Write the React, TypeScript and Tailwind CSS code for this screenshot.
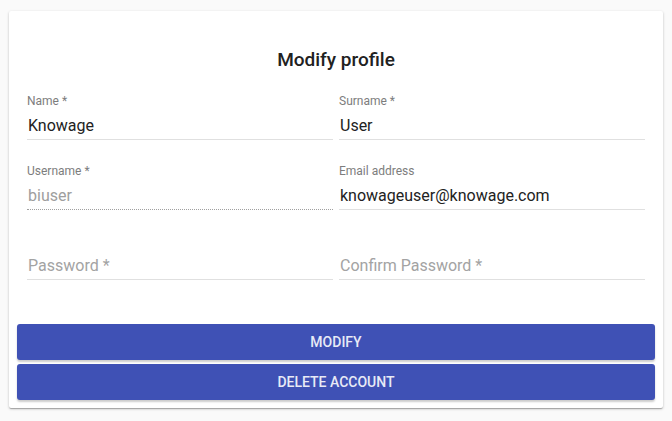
const fields = [
  [
    { label: "Name *", value: "Knowage" },
    { label: "Surname *", value: "User" },
  ],
  [
    { label: "Username *", value: "biuser", disabled: true },
    { label: "Email address", value: "knowageuser@knowage.com" },
  ],
  [
    { label: "", placeholder: "Password *" },
    { label: "", placeholder: "Confirm Password *" },
  ],
];

type Field = { label: string; value?: string; placeholder?: string; disabled?: boolean };

function Input({ f }: { f: Field }) {
  const underline = f.disabled
    ? "border-b border-dotted border-[#a0a0a0]"
    : "border-b border-[#e0e0e0]";
  return (
    <div className="flex flex-col">
      <label className="h-[16px] text-[12px] leading-[16px] text-[#7d7d7d]">{f.label}</label>
      <div className={`mt-[4px] h-[27px] pl-[1px] text-[16px] leading-[26px] ${underline}`}>
        {f.value ? (
          <span className={f.disabled ? "text-[#9e9e9e]" : "text-[#222222]"}>{f.value}</span>
        ) : (
          <span className="text-[#a3a3a3]">{f.placeholder}</span>
        )}
      </div>
    </div>
  );
}

export default function App() {
  return (
    <div className="min-h-screen bg-[#fafafa] pt-[11px] pl-[9px]" style={{ fontFamily: "Roboto, 'Liberation Sans', sans-serif" }}>
      <div className="w-[654px] rounded-[2px] bg-white pb-[8px] shadow-[0_1px_3px_rgba(0,0,0,0.2),0_1px_1px_rgba(0,0,0,0.14),0_2px_1px_-1px_rgba(0,0,0,0.12)]">
        <h1 className="pt-[37px] text-center text-[19px] font-medium leading-[24px] text-[#212121]">
          Modify profile
        </h1>
        <div className="mt-[21px] flex flex-col gap-[23px] px-[18px]">
          {fields.map((row, i) => (
            <div key={i} className="grid grid-cols-2 gap-[6px]">
              {row.map((f) => (
                <Input key={f.label + (f.placeholder ?? "")} f={f} />
              ))}
            </div>
          ))}
        </div>
        <div className="mt-[44px] flex flex-col gap-[4px] px-[8px]">
          {["Modify", "Delete account"].map((b) => (
            <button
              key={b}
              className="h-[36px] rounded-[3px] bg-[#3f51b5] text-[14px] font-medium uppercase text-[#e8eaf6] shadow-[0_2px_2px_rgba(0,0,0,0.2)]"
            >
              {b}
            </button>
          ))}
        </div>
      </div>
    </div>
  );
}
